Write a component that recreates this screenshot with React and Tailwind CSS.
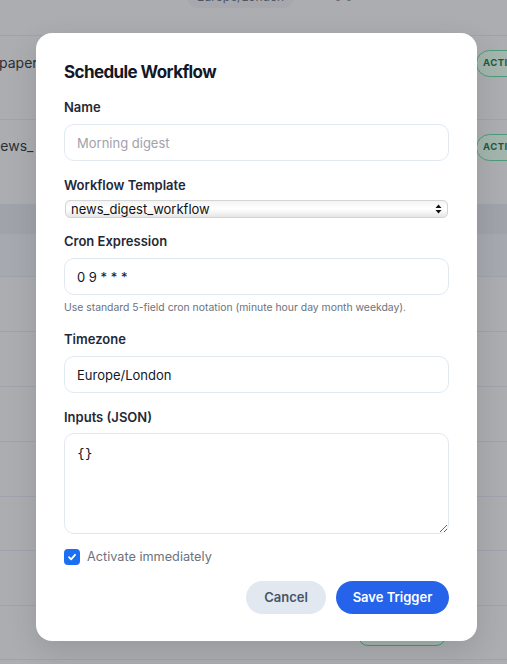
import React from "react";

function Field({ label, children, className = "" }) {
  return (
    <div className={className}>
      <div className="text-[13px] leading-[20px] font-semibold text-[#1f2937]">{label}</div>
      {children}
    </div>
  );
}

function Badge() {
  return (
    <div className="h-[27px] w-[80px] shrink-0 rounded-full border border-[#4f9a7a] bg-[#a3b5ad] pl-[6px] flex items-center text-[9.5px] font-bold tracking-[0.05em] text-[#1d5b40]">
      ACTIVE
    </div>
  );
}

export default function App() {
  return (
    <div className="relative w-[507px] h-[664px] overflow-hidden bg-[#acadb1]" style={{ fontFamily: "Inter, 'Noto Sans', sans-serif" }}>
      {/* Underlying dimmed page */}
      <div className="flex flex-col">
        <div className="h-[36px] border-b border-[#9ea3ad] overflow-hidden">
          <div className="flex items-center -mt-[14px] pl-[187px] gap-[40px]">
            <div className="h-[22px] px-[10px] rounded-full bg-[#a6a8ad] text-[12px] leading-[22px] text-[#4b5563]">Europe/London</div>
            <div className="text-[12px] text-[#6b6e75]">0 9 * * *</div>
          </div>
        </div>
        <div className="h-[84px] border-b border-[#9ea3ad] flex items-start justify-between pt-[14px]">
          <div className="w-[36px] overflow-hidden whitespace-nowrap text-[14px] leading-[20px] text-[#2d2f33] pt-[3px]">
            <span className="-ml-[1px]">paper_</span>
          </div>
          <div className="w-[31px] overflow-hidden"><Badge /></div>
        </div>
        <div className="h-[85px] border-b border-[#9ea3ad] flex items-start justify-between pt-[14px]">
          <div className="w-[36px] overflow-hidden whitespace-nowrap text-[14px] leading-[20px] text-[#2d2f33] pt-[2px]">
            <span className="inline-block -ml-[8px]">news_</span>
          </div>
          <div className="w-[31px] overflow-hidden"><Badge /></div>
        </div>
        <div className="h-[29px] bg-[#a0a3aa] border-b border-[#9ea3ad]"></div>
        <div className="h-[43px] bg-[#a6a9b0] border-b border-[#9ea3ad]"></div>
        <div className="h-[55px] border-b border-[#9ea3ad]"></div>
        <div className="h-[55px] border-b border-[#9ea3ad]"></div>
        <div className="h-[55px] border-b border-[#9ea3ad]"></div>
        <div className="h-[55px] border-b border-[#9ea3ad]"></div>
        <div className="h-[54px] border-b border-[#9ea3ad]"></div>
        <div className="h-[55px] border-b border-[#9ea3ad]"></div>
        <div className="h-[54px] border-b border-[#9ea3ad] flex items-start pt-[13px] pl-[358px]">
          <div className="h-[27px] w-[88px] rounded-[10px] border border-[#3f9a75] bg-[#a3b5ad]"></div>
        </div>
      </div>

      {/* Modal */}
      <div className="absolute left-[36px] top-[33px] w-[441px] h-[608px] rounded-[16px] bg-white shadow-[0_10px_30px_rgba(0,0,0,0.12)] px-[28px] pt-[25px]">
        <div className="text-[17px] leading-[28px] font-bold tracking-[-0.035em] text-[#111827]">Schedule Workflow</div>

        <Field label="Name" className="mt-[11px]">
          <input
            className="mt-[7px] block w-full h-[37px] rounded-[10px] border border-[#e2e8f0] px-[12px] text-[13px] text-[#111827] placeholder:text-[#a1a1aa] outline-none"
            placeholder="Morning digest"
          />
        </Field>

        <Field label="Workflow Template" className="mt-[14px]">
          <div className="relative mt-[5px] ml-[1px] w-[383px]">
            <select
              className="appearance-none block w-full h-[18px] rounded-[5px] border border-[#d4d4d4] bg-linear-to-b from-[#f4f4f4] via-white to-[#e6e6e6] pl-[5px] text-[13px] leading-[16px] text-[#111] outline-none"
              defaultValue="news_digest_workflow"
            >
              <option>news_digest_workflow</option>
            </select>
            <svg className="absolute right-[6px] top-[4px] pointer-events-none" width="7" height="10" viewBox="0 0 7 10">
              <path d="M3.5 0.5 L6.5 4 L0.5 4 Z" fill="#111" />
              <path d="M3.5 9.5 L6.5 6 L0.5 6 Z" fill="#111" />
            </svg>
          </div>
        </Field>

        <Field label="Cron Expression" className="mt-[13px]">
          <input
            className="mt-[7px] block w-full h-[37px] rounded-[10px] border border-[#e2e8f0] px-[12px] text-[13px] text-[#111827] outline-none"
            defaultValue="0 9 * * *"
          />
          <div className="mt-[5px] text-[10.4px] leading-[15px] text-[#6b7280]">
            Use standard 5-field cron notation (minute hour day month weekday).
          </div>
        </Field>

        <Field label="Timezone" className="mt-[14px]">
          <input
            className="mt-[7px] block w-full h-[37px] rounded-[10px] border border-[#e2e8f0] px-[12px] text-[13px] text-[#111827] outline-none"
            defaultValue="Europe/London"
          />
        </Field>

        <Field label="Inputs (JSON)" className="mt-[14px]">
          <textarea
            className="mt-[6px] block w-full h-[101px] rounded-[10px] border border-[#e2e8f0] px-[12px] pt-[10px] text-[13px] leading-[20px] text-[#111827] outline-none resize-y"
            style={{ fontFamily: "'DejaVu Sans Mono', monospace" }}
            defaultValue="{}"
          />
        </Field>

        <div className="mt-[15px] flex items-center h-[16px]">
          <div className="w-[16px] h-[16px] rounded-[4px] bg-[#1a6ff2] flex items-center justify-center">
            <svg width="10" height="10" viewBox="0 0 10 10">
              <path d="M2 5.2 L4.1 7.3 L8 2.8" fill="none" stroke="white" strokeWidth="1.8" strokeLinecap="round" strokeLinejoin="round" />
            </svg>
          </div>
          <span className="ml-[7px] text-[12.7px] text-[#6b7280]">Activate immediately</span>
        </div>

        <div className="mt-[16px] flex justify-end gap-[10px]">
          <button className="w-[80px] h-[33px] rounded-full bg-[#e2e8f0] text-[13px] font-semibold text-[#475569]">Cancel</button>
          <button className="w-[113px] h-[33px] rounded-full bg-[#2563eb] text-[13px] font-semibold text-white">Save Trigger</button>
        </div>
      </div>
    </div>
  );
}
